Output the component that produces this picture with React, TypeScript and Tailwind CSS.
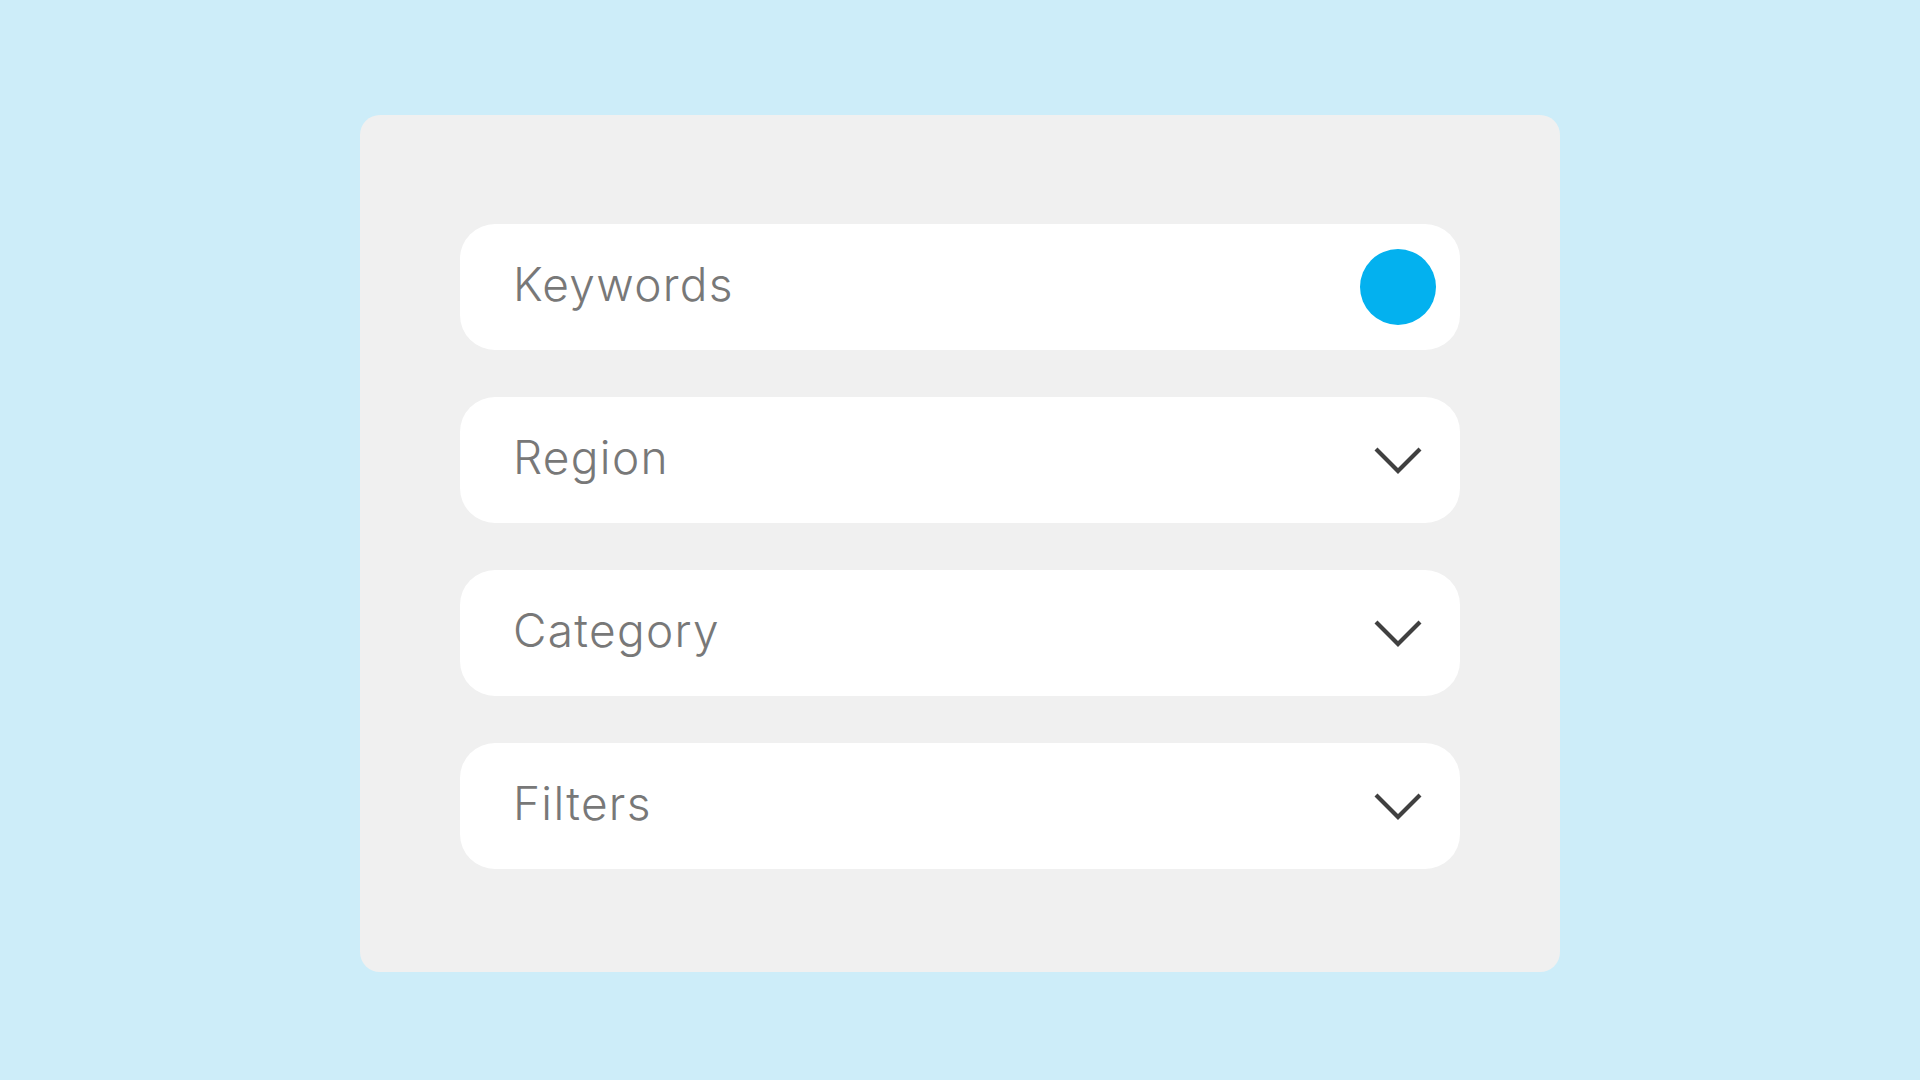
import React from 'react'

const Chevron: React.FC = () => (
  <svg width="50" height="28" viewBox="0 0 50 28" fill="none">
    <polyline points="3,3 25,25 47,3" stroke="#404040" strokeWidth="4.2" strokeLinecap="butt" strokeLinejoin="miter" />
  </svg>
)

const App: React.FC = () => {
  const rows = [
    { id: 'keywords', label: 'Keywords', toggle: true },
    { id: 'region', label: 'Region', toggle: false },
    { id: 'category', label: 'Category', toggle: false },
    { id: 'filters', label: 'Filters', toggle: false }
  ]

  return (
    <div className="w-full h-screen bg-[#cdedf9] pt-[115px] font-['Inter','Noto_Sans',sans-serif]">
      <div className="mx-auto w-[1200px] h-[857px] bg-[#f0f0f0] rounded-[20px] pt-[109px] px-[100px]">
        <div className="flex flex-col gap-[47px]">
          {rows.map((row) => (
            <div
              key={row.id}
              className="h-[126px] bg-white rounded-[35px] flex items-center justify-between pl-[53px] pr-[24px]"
            >
              <span className="mb-[6px] text-[46px] leading-none text-[#787878] tracking-[1.3px] font-[350]">
                {row.label}
              </span>
              <div className="w-[76px] h-[76px] flex items-center justify-center">
                {row.toggle ? (
                  <div className="w-[76px] h-[76px] rounded-full bg-[#03b1ef]" />
                ) : (
                  <Chevron />
                )}
              </div>
            </div>
          ))}
        </div>
      </div>
    </div>
  )
}

export default App
